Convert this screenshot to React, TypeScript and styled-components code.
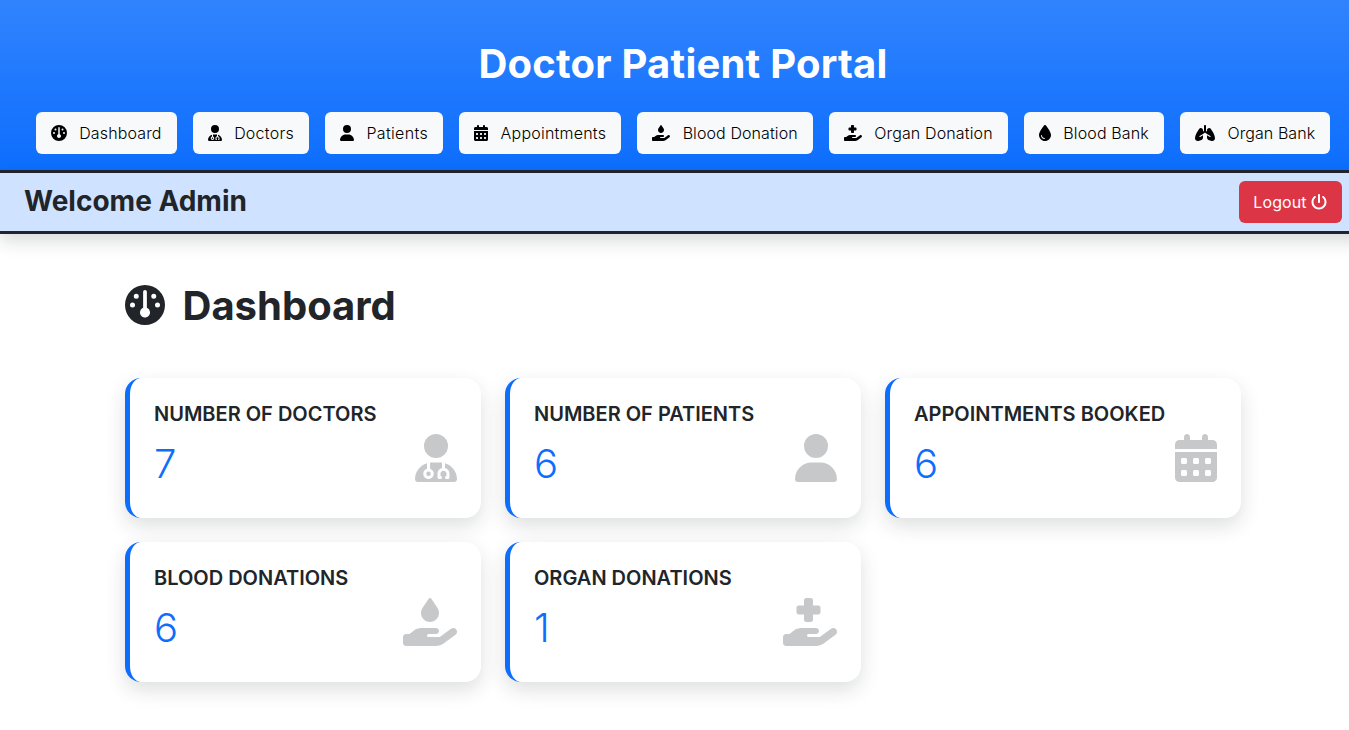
import React from "react";
import styled, { createGlobalStyle } from "styled-components";
import type { IconType } from "react-icons";
import {
  FaGauge,
  FaUserDoctor,
  FaUser,
  FaCalendarDays,
  FaHandHoldingDroplet,
  FaHandHoldingMedical,
  FaDroplet,
  FaLungs,
  FaPowerOff,
} from "react-icons/fa6";

const GlobalStyle = createGlobalStyle`
  *, *::before, *::after { box-sizing: border-box; }
  html { overflow: hidden; }
  body {
    margin: 0;
    background: #fff;
    color: #212529;
    font: 400 16px/1.5 Inter, "Liberation Sans", sans-serif;
  }
  h1, h2, h3, p { margin: 0; }
  button { font: inherit; }
`;

const Page = styled.div`
  width: 1366px;
  min-height: 100vh;
`;

const Header = styled.header`
  height: 170px;
  padding-top: 40px;
  background: #0d6efd linear-gradient(180deg, rgba(255, 255, 255, 0.15), rgba(255, 255, 255, 0));
`;

const SiteTitle = styled.h1`
  color: #fff;
  font-size: 40px;
  font-weight: 700;
  letter-spacing: 0.22px;
  line-height: 48px;
  text-align: center;
`;

const Nav = styled.nav`
  display: flex;
  justify-content: center;
  gap: 16px;
  margin-top: 24px;
`;

const NavButton = styled.button<{ $tracking?: number }>`
  display: flex;
  align-items: center;
  gap: 12.5px;
  height: 42px;
  padding: 0 15px;
  border: 0;
  border-radius: 6px;
  background: #f8f9fa;
  color: #000;
  font-weight: 300;
  letter-spacing: ${(p) => p.$tracking ?? 0.14}px;
  white-space: nowrap;
`;

const WelcomeBar = styled.div`
  display: flex;
  align-items: center;
  justify-content: space-between;
  height: 64px;
  padding: 0 24px;
  border-top: 3px solid #212529;
  border-bottom: 3px solid #212529;
  background: #cfe2ff;
  box-shadow: 0 8px 16px rgba(16, 32, 24, 0.15);
`;

const Welcome = styled.h3`
  padding-bottom: 2px;
  font-size: 28px;
  font-weight: 700;
  line-height: 34px;
`;

const LogoutButton = styled.button`
  display: flex;
  align-items: center;
  justify-content: center;
  gap: 4px;
  width: 103px;
  height: 42px;
  padding: 0 1px 0 0;
  border: 0;
  border-radius: 6px;
  background: #dc3545;
  color: #fff;
  letter-spacing: 0.1px;
`;

const Main = styled.main`
  width: 1116px;
  margin: 0 auto;
  padding-top: 47px;
`;

const PageTitle = styled.h2`
  display: flex;
  align-items: center;
  gap: 17.5px;
  font-size: 40px;
  font-weight: 700;
  line-height: 48px;
`;

const PageTitleText = styled.span`
  padding-top: 1px;
  margin-bottom: -1px;
`;

const CardGrid = styled.section`
  display: grid;
  grid-template-columns: repeat(3, 356px);
  gap: 24px;
  margin-top: 49px;
`;

const Card = styled.article`
  height: 140px;
  padding: 24px;
  border-left: 5px solid #0d6efd;
  border-radius: 16px;
  background: #fff;
  box-shadow: 0 8px 20px rgba(16, 32, 24, 0.14);
`;

const CardTitle = styled.h3`
  font-size: 20px;
  font-weight: 600;
  line-height: 24px;
  text-transform: uppercase;
  white-space: nowrap;
`;

const CardRow = styled.div`
  display: flex;
  justify-content: space-between;
  align-items: flex-start;
  margin-top: 8px;
`;

const CardValue = styled.p`
  padding-top: 6px;
  color: #0d6efd;
  font-size: 40px;
  font-weight: 300;
  line-height: 48px;
`;

/* $ratio is the icon's width relative to its height. */
const Glyph = styled.span<{ $size: number; $ratio?: number; $faded?: boolean }>`
  display: flex;
  color: ${(p) => (p.$faded ? "rgba(33, 37, 41, 0.25)" : "inherit")};

  svg {
    display: block;
    width: ${(p) => p.$size * (p.$ratio ?? 1)}px;
    height: ${(p) => p.$size}px;
  }
`;

type Item = { label: string; icon: IconType; ratio: number };

const navItems: (Item & { tracking?: number })[] = [
  { label: "Dashboard", icon: FaGauge, ratio: 1 },
  { label: "Doctors", icon: FaUserDoctor, ratio: 0.875, tracking: 0.24 },
  { label: "Patients", icon: FaUser, ratio: 0.875, tracking: 0.34 },
  { label: "Appointments", icon: FaCalendarDays, ratio: 0.875, tracking: 0.22 },
  { label: "Blood Donation", icon: FaHandHoldingDroplet, ratio: 1.125, tracking: 0.09 },
  { label: "Organ Donation", icon: FaHandHoldingMedical, ratio: 1.125 },
  { label: "Blood Bank", icon: FaDroplet, ratio: 0.75 },
  { label: "Organ Bank", icon: FaLungs, ratio: 1.25, tracking: 0.08 },
];

const stats: (Item & { value: number })[] = [
  { label: "Number of Doctors", value: 7, icon: FaUserDoctor, ratio: 0.875 },
  { label: "Number of Patients", value: 6, icon: FaUser, ratio: 0.875 },
  { label: "Appointments Booked", value: 6, icon: FaCalendarDays, ratio: 0.875 },
  { label: "Blood Donations", value: 6, icon: FaHandHoldingDroplet, ratio: 1.125 },
  { label: "Organ Donations", value: 1, icon: FaHandHoldingMedical, ratio: 1.125 },
];

export default function App() {
  return (
    <>
      <GlobalStyle />
      <Page>
        <Header>
          <SiteTitle>Doctor Patient Portal</SiteTitle>
          <Nav>
            {navItems.map(({ label, icon: Icon, ratio, tracking }) => (
              <NavButton key={label} $tracking={tracking}>
                <Glyph $size={16} $ratio={ratio}><Icon /></Glyph>
                {label}
              </NavButton>
            ))}
          </Nav>
        </Header>
        <WelcomeBar>
          <Welcome>Welcome Admin</Welcome>
          <LogoutButton>
            Logout
            <Glyph $size={16}><FaPowerOff /></Glyph>
          </LogoutButton>
        </WelcomeBar>
        <Main>
          <PageTitle>
            <Glyph $size={40}><FaGauge /></Glyph>
            <PageTitleText>Dashboard</PageTitleText>
          </PageTitle>
          <CardGrid>
            {stats.map(({ label, value, icon: Icon, ratio }) => (
              <Card key={label}>
                <CardTitle>{label}</CardTitle>
                <CardRow>
                  <CardValue>{value}</CardValue>
                  <Glyph $size={48} $ratio={ratio} $faded><Icon /></Glyph>
                </CardRow>
              </Card>
            ))}
          </CardGrid>
        </Main>
      </Page>
    </>
  );
}
